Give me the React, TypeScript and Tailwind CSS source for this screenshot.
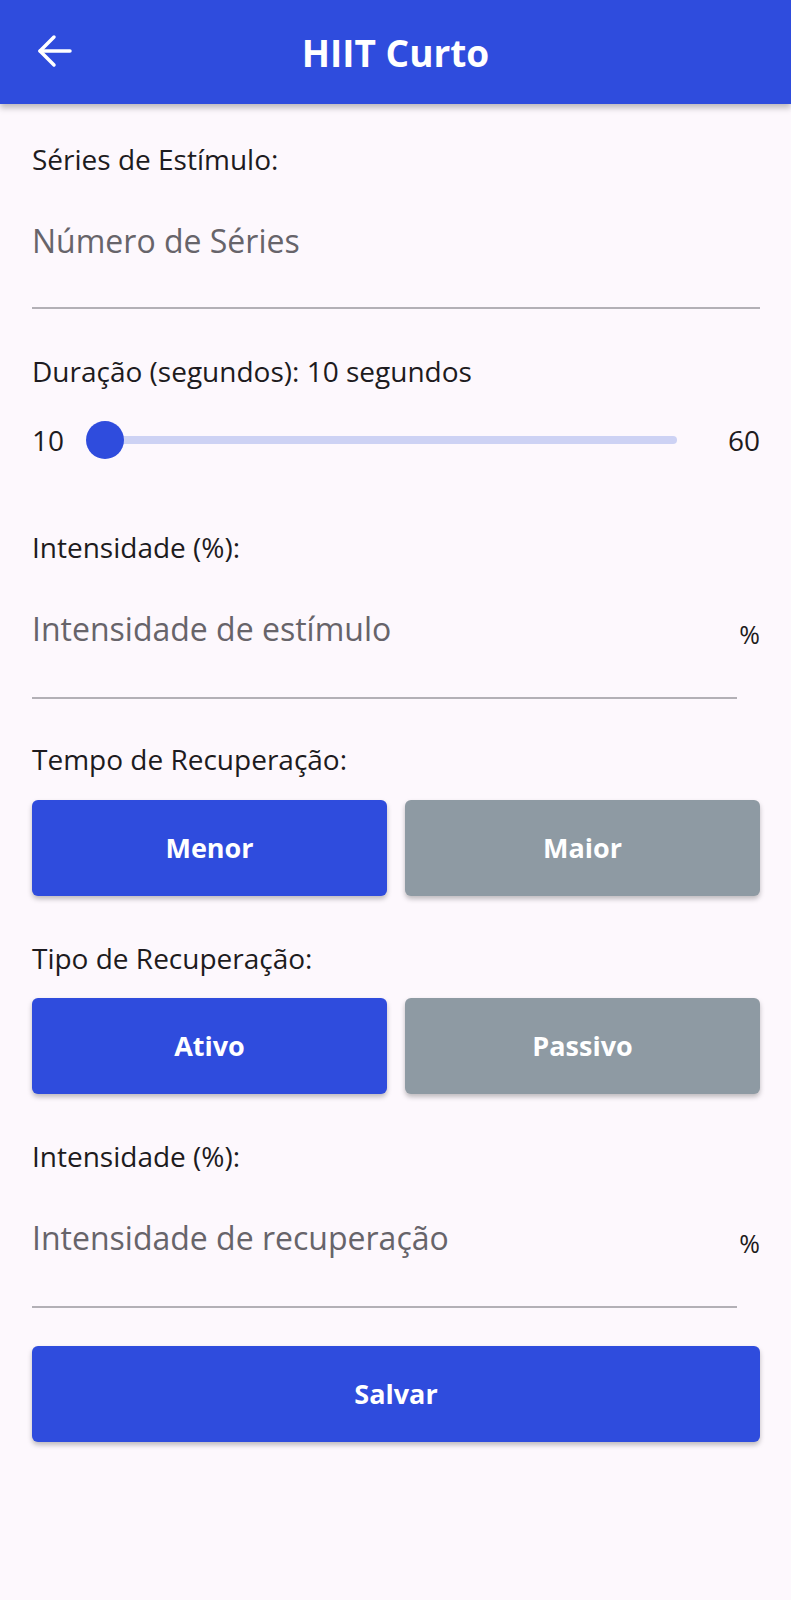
import React from "react";

const font = { fontFamily: '"Open Sans", "Noto Sans", sans-serif' };

function Label({ children, className = "" }: { children: React.ReactNode; className?: string }) {
  return (
    <div className={`h-[40px] flex items-center text-[28px] text-[#1d1b20] ${className}`}>{children}</div>
  );
}

function Field({ placeholder, suffix }: { placeholder: string; suffix?: boolean }) {
  if (!suffix) {
    return (
      <div className="h-[130px] flex items-center pb-[4px] border-b-2 border-[#b3b0b6] text-[32px] text-[#67646a]">
        {placeholder}
      </div>
    );
  }
  return (
    <div className="flex items-stretch">
      <div className="flex-1 h-[132px] flex items-center pb-[6px] border-b-2 border-[#b3b0b6] text-[32px] text-[#67646a]">
        {placeholder}
      </div>
      <div className="w-[23px] flex items-center pt-[4px] justify-end text-[25px] text-[#1d1b20]">%</div>
    </div>
  );
}

function Btn({ label, active }: { label: string; active: boolean }) {
  return (
    <div
      className={`h-[96px] flex-1 rounded-[6px] flex items-center justify-center text-white font-bold text-[27px] shadow-[0_3px_5px_rgba(0,0,0,0.25)] ${
        active ? "bg-[#2f4cdd]" : "bg-[#8e9aa3]"
      }`}
    >
      {label}
    </div>
  );
}

export default function App() {
  return (
    <div className="w-[791px] min-h-[1600px] bg-[#fdf8fd]" style={font}>
      <header className="relative h-[104px] bg-[#2f4cdd] flex items-center justify-center shadow-[0_4px_6px_rgba(0,0,0,0.25)]">
        <svg className="absolute left-[37px] top-[34px]" width="36" height="36" viewBox="0 0 36 36" fill="none">
          <path d="M3 17H33" stroke="white" strokeWidth="3.5" strokeLinecap="round" />
          <path d="M17 3L3 17L17 31" stroke="white" strokeWidth="3.5" strokeLinecap="round" strokeLinejoin="round" />
        </svg>
        <h1 className="text-white font-bold text-[37px] leading-none">HIIT Curto</h1>
      </header>

      <main className="px-[32px] pr-[31px] pt-[35px] pb-[40px]">
        <Label>Séries de Estímulo:</Label>
        <Field placeholder="Número de Séries" />

        <Label className="mt-[42px]">Duração (segundos): 10 segundos</Label>
        <div className="mt-[29px] h-[40px] flex items-center text-[28px] text-[#1d1b20]">
          <span className="w-[52px]">10</span>
          <div className="relative w-[593px] h-[40px] flex items-center">
            <div className="absolute left-[20px] right-0 h-[8px] rounded-full bg-[#cdd2f4]" />
            <div className="absolute left-[2px] top-[1px] w-[38px] h-[38px] rounded-full bg-[#2f4cdd]" />
          </div>
          <span className="ml-auto">60</span>
        </div>

        <Label className="mt-[67px]">Intensidade (%):</Label>
        <Field placeholder="Intensidade de estímulo" suffix />

        <Label className="mt-[40px]">Tempo de Recuperação:</Label>
        <div className="mt-[21px] flex gap-[18px]">
          <Btn label="Menor" active />
          <Btn label="Maior" active={false} />
        </div>

        <Label className="mt-[42px]">Tipo de Recuperação:</Label>
        <div className="mt-[20px] flex gap-[18px]">
          <Btn label="Ativo" active />
          <Btn label="Passivo" active={false} />
        </div>

        <Label className="mt-[42px]">Intensidade (%):</Label>
        <Field placeholder="Intensidade de recuperação" suffix />

        <div className="mt-[38px] flex">
          <Btn label="Salvar" active />
        </div>
      </main>
    </div>
  );
}
